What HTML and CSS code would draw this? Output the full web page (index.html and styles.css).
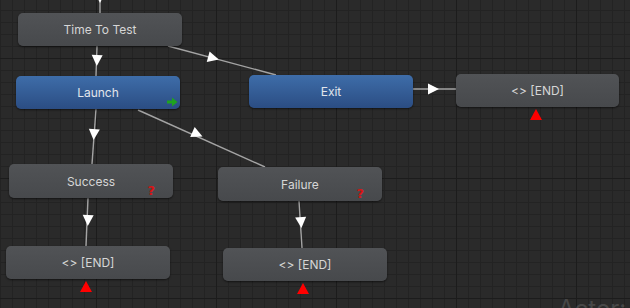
FILE: index.html
```html
<!DOCTYPE html>
<html>
<head>
<meta charset="utf-8">
<link rel="stylesheet" href="styles.css">
</head>
<body>
<div class="canvas">
  <svg class="edges" width="630" height="308" viewBox="0 0 630 308">
    <g class="lines">
      <line x1="100" y1="0" x2="100" y2="13"/>
      <line x1="97" y1="46" x2="96" y2="76"/>
      <line x1="168" y1="46" x2="276" y2="75"/>
      <line x1="412" y1="89" x2="456" y2="89"/>
      <line x1="96" y1="109" x2="92" y2="164"/>
      <line x1="138" y1="110" x2="265" y2="167"/>
      <line x1="88" y1="198" x2="86" y2="246"/>
      <line x1="299" y1="201" x2="302" y2="248"/>
    </g>
    <g class="arrows">
      <polygon points="6,0 -5,-5.5 -5,5.5" transform="translate(100 -3) rotate(90)"/>
      <polygon points="6,0 -5,-5.5 -5,5.5" transform="translate(97 60) rotate(92)"/>
      <polygon points="6,0 -5,-5.5 -5,5.5" transform="translate(213 58) rotate(15)"/>
      <polygon points="6,0 -5,-5.5 -5,5.5" transform="translate(433 89) rotate(0)"/>
      <polygon points="6,0 -5,-5.5 -5,5.5" transform="translate(94 134) rotate(94)"/>
      <polygon points="6,0 -5,-5.5 -5,5.5" transform="translate(197 134) rotate(24)"/>
      <polygon points="6,0 -5,-5.5 -5,5.5" transform="translate(88 220) rotate(92)"/>
      <polygon points="6,0 -5,-5.5 -5,5.5" transform="translate(301 222) rotate(86)"/>
    </g>
  </svg>

  <div class="node gray n-time">Time To Test</div>
  <div class="node blue n-launch">Launch
    <svg class="enter" width="11" height="10" viewBox="0 0 11 10"><path d="M0 3.5h5V0.5L10.5 5 5 9.5V6.5H0z"/></svg>
  </div>
  <div class="node blue n-exit">Exit</div>
  <div class="node gray n-end1">&lt;&gt; [END]<span class="tri"></span></div>
  <div class="node gray n-success">Success<span class="q">?</span></div>
  <div class="node gray n-failure">Failure<span class="q">?</span></div>
  <div class="node gray n-end2">&lt;&gt; [END]<span class="tri"></span></div>
  <div class="node gray n-end3">&lt;&gt; [END]<span class="tri"></span></div>

  <div class="watermark">Actor: l</div>
</div>
</body>
</html>
```

FILE: styles.css
```css
html, body {
  margin: 0;
  padding: 0;
  background: #2a2a2a;
}
.canvas {
  position: relative;
  width: 630px;
  height: 308px;
  overflow: hidden;
  font-family: Inter, "Noto Sans", sans-serif;
  background-color: #2a2a2a;
  background-image:
    linear-gradient(to right, #1c1c1c 1px, transparent 1px),
    linear-gradient(to bottom, #1c1c1c 1px, transparent 1px),
    linear-gradient(to right, #232323 1px, transparent 1px),
    linear-gradient(to bottom, #232323 1px, transparent 1px);
  background-size: 120px 120px, 120px 120px, 12px 12px, 12px 12px;
  background-position: 96px 0, 0 58px, 0 0, 0 10px;
}
.edges {
  position: absolute;
  left: 0;
  top: 0;
}
.lines line {
  stroke: #a4a4a4;
  stroke-width: 1.4;
}
.arrows polygon {
  fill: #ffffff;
}
.node {
  position: absolute;
  width: 164px;
  height: 33px;
  border-radius: 5px;
  display: flex;
  align-items: center;
  justify-content: center;
  font-size: 12px;
  color: #d6d6d6;
  box-shadow: 0 1px 2px rgba(0, 0, 0, 0.55);
  box-sizing: border-box;
}
.gray {
  background: linear-gradient(#515356, #47494c);
}
.blue {
  background: linear-gradient(#3e6da9, #2b4d83);
  color: #e2e6ec;
}
.n-time { left: 18px; top: 13px; }
.n-launch { left: 16px; top: 76px; }
.n-exit { left: 249px; top: 75px; }
.n-end1 { left: 456px; top: 74px; width: 163px; }
.n-success { left: 9px; top: 164px; height: 34px; }
.n-failure { left: 218px; top: 167px; height: 34px; }
.n-end2 { left: 6px; top: 246px; }
.n-end3 { left: 223px; top: 248px; }

.enter {
  position: absolute;
  right: 2px;
  bottom: 2px;
  fill: #1fa31f;
}
.q {
  position: absolute;
  right: 18px;
  bottom: 0px;
  font-family: "DejaVu Sans", sans-serif;
  font-weight: bold;
  font-size: 13px;
  line-height: 14px;
  color: #d81414;
}
.tri {
  position: absolute;
  left: 50%;
  top: 100%;
  margin-left: -8px;
  margin-top: 2px;
  width: 0;
  height: 0;
  border-left: 6px solid transparent;
  border-right: 6px solid transparent;
  border-bottom: 11px solid #ff0000;
}
.watermark {
  position: absolute;
  left: 558px;
  top: 295px;
  font-size: 24px;
  line-height: 28px;
  color: #474747;
  white-space: nowrap;
}
```
